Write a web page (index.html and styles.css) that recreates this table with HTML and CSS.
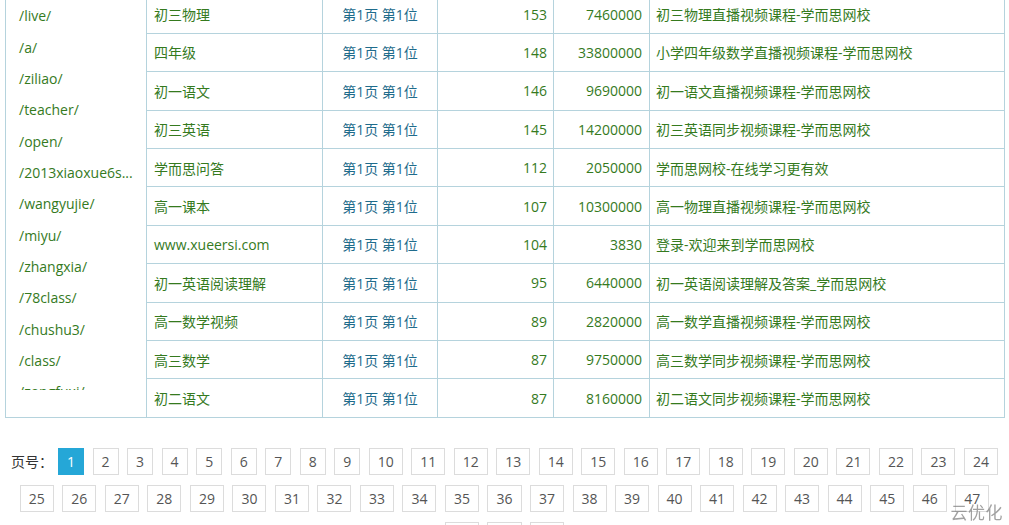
FILE: index.html
```html
<!DOCTYPE html>
<html lang="zh-CN">
<head>
<meta charset="utf-8">
<title>关键词排名</title>
<link rel="stylesheet" href="styles.css">
</head>
<body>
<div class="wrap">
  <div class="side">
    <ul class="paths">
      <li>/live/</li>
      <li>/a/</li>
      <li>/ziliao/</li>
      <li>/teacher/</li>
      <li>/open/</li>
      <li>/2013xiaoxue6s...</li>
      <li>/wangyujie/</li>
      <li>/miyu/</li>
      <li>/zhangxia/</li>
      <li>/78class/</li>
      <li>/chushu3/</li>
      <li>/class/</li>
      <li>/zongfuxi/</li>
    </ul>
  </div>
  <div class="rows">
    <div class="row"><div class="c kw">初三物理</div><div class="c rank">第1页 第1位</div><div class="c num">153</div><div class="c vol">7460000</div><div class="c title">初三物理直播视频课程-学而思网校</div></div>
    <div class="row"><div class="c kw">四年级</div><div class="c rank">第1页 第1位</div><div class="c num">148</div><div class="c vol">33800000</div><div class="c title">小学四年级数学直播视频课程-学而思网校</div></div>
    <div class="row"><div class="c kw">初一语文</div><div class="c rank">第1页 第1位</div><div class="c num">146</div><div class="c vol">9690000</div><div class="c title">初一语文直播视频课程-学而思网校</div></div>
    <div class="row"><div class="c kw">初三英语</div><div class="c rank">第1页 第1位</div><div class="c num">145</div><div class="c vol">14200000</div><div class="c title">初三英语同步视频课程-学而思网校</div></div>
    <div class="row"><div class="c kw">学而思问答</div><div class="c rank">第1页 第1位</div><div class="c num">112</div><div class="c vol">2050000</div><div class="c title">学而思网校-在线学习更有效</div></div>
    <div class="row"><div class="c kw">高一课本</div><div class="c rank">第1页 第1位</div><div class="c num">107</div><div class="c vol">10300000</div><div class="c title">高一物理直播视频课程-学而思网校</div></div>
    <div class="row"><div class="c kw">www.xueersi.com</div><div class="c rank">第1页 第1位</div><div class="c num">104</div><div class="c vol">3830</div><div class="c title">登录-欢迎来到学而思网校</div></div>
    <div class="row"><div class="c kw">初一英语阅读理解</div><div class="c rank">第1页 第1位</div><div class="c num">95</div><div class="c vol">6440000</div><div class="c title">初一英语阅读理解及答案_学而思网校</div></div>
    <div class="row"><div class="c kw">高一数学视频</div><div class="c rank">第1页 第1位</div><div class="c num">89</div><div class="c vol">2820000</div><div class="c title">高一数学直播视频课程-学而思网校</div></div>
    <div class="row"><div class="c kw">高三数学</div><div class="c rank">第1页 第1位</div><div class="c num">87</div><div class="c vol">9750000</div><div class="c title">高三数学同步视频课程-学而思网校</div></div>
    <div class="row"><div class="c kw">初二语文</div><div class="c rank">第1页 第1位</div><div class="c num">87</div><div class="c vol">8160000</div><div class="c title">初二语文同步视频课程-学而思网校</div></div>
  </div>
</div>

<div class="pager">
  <span class="label">页号：</span>
  <a class="pg active">1</a><a class="pg">2</a><a class="pg">3</a><a class="pg">4</a><a class="pg">5</a><a class="pg">6</a><a class="pg">7</a><a class="pg">8</a><a class="pg">9</a><a class="pg">10</a><a class="pg">11</a><a class="pg">12</a><a class="pg">13</a><a class="pg">14</a><a class="pg">15</a><a class="pg">16</a><a class="pg">17</a><a class="pg">18</a><a class="pg">19</a><a class="pg">20</a><a class="pg">21</a><a class="pg">22</a><a class="pg">23</a><a class="pg">24</a><a class="pg">25</a><a class="pg">26</a><a class="pg">27</a><a class="pg">28</a><a class="pg">29</a><a class="pg">30</a><a class="pg">31</a><a class="pg">32</a><a class="pg">33</a><a class="pg">34</a><a class="pg">35</a><a class="pg">36</a><a class="pg">37</a><a class="pg">38</a><a class="pg">39</a><a class="pg">40</a><a class="pg">41</a><a class="pg">42</a><a class="pg">43</a><a class="pg">44</a><a class="pg">45</a><a class="pg">46</a><a class="pg">47</a><a class="pg">48</a><a class="pg">49</a><a class="pg">50</a>
</div>

<div class="watermark">云优化</div>
</body>
</html>
```

FILE: styles.css
```css
html {
  overflow: hidden;
}
body {
  margin: 0;
  background: #fff;
  font-family: "Open Sans", "Noto Sans CJK SC", sans-serif;
  font-size: 14px;
  color: #333;
}
.wrap {
  display: flex;
  width: 1000px;
  box-sizing: border-box;
  margin: -4.6px 0 0 5px;
  border: 1px solid #b5d3dd;
  border-top: 0;
}
.side {
  width: 141px;
  flex: none;
  border-right: 1px solid #b5d3dd;
  box-sizing: border-box;
}
.paths {
  list-style: none;
  margin: 0;
  padding: 5px 0 0 13px;
  height: 394.6px;
  box-sizing: border-box;
  overflow: hidden;
}
.paths li {
  line-height: 31.33px;
  color: #357a1e;
  white-space: nowrap;
}
.rows {
  flex: 1;
  display: flex;
  flex-direction: column;
}
.row {
  display: flex;
  height: 38.4px;
  box-sizing: border-box;
  border-bottom: 1px solid #b5d3dd;
}
.row:last-child {
  height: 37.4px;
  border-bottom: 0;
}
.c {
  display: flex;
  align-items: center;
  box-sizing: border-box;
  white-space: nowrap;
  color: #357a1e;
}
.kw {
  width: 176px;
  padding-left: 7px;
  border-right: 1px solid #b5d3dd;
}
.rank {
  width: 115px;
  justify-content: center;
  color: #1f6c8c;
  border-right: 1px solid #b5d3dd;
}
.num {
  width: 116px;
  justify-content: flex-end;
  padding-right: 6px;
  border-right: 1px solid #b5d3dd;
}
.vol {
  width: 96px;
  justify-content: flex-end;
  padding-right: 7px;
  border-right: 1px solid #b5d3dd;
}
.title {
  flex: 1;
  padding-left: 6px;
}
.pager {
  display: flex;
  flex-wrap: wrap;
  justify-content: center;
  align-items: center;
  column-gap: 8.5px;
  row-gap: 10px;
  margin-top: 30px;
}
.label {
  margin-right: -3.5px;
  color: #333;
  font-size: 14px;
  line-height: 27px;
}
.pg {
  display: block;
  height: 27px;
  box-sizing: border-box;
  padding: 0 8px;
  border: 1px solid #dcdcdc;
  line-height: 25px;
  color: #555;
  font-size: 14px;
  text-align: center;
}
.pg.active {
  background: #25a7d7;
  border-color: #25a7d7;
  color: #fff;
}
.watermark {
  position: fixed;
  right: 6px;
  bottom: 1px;
  font-size: 17px;
  letter-spacing: 0.5px;
  color: rgba(130, 130, 130, 0.75);
  font-family: "Noto Sans CJK SC", sans-serif;
}
```
